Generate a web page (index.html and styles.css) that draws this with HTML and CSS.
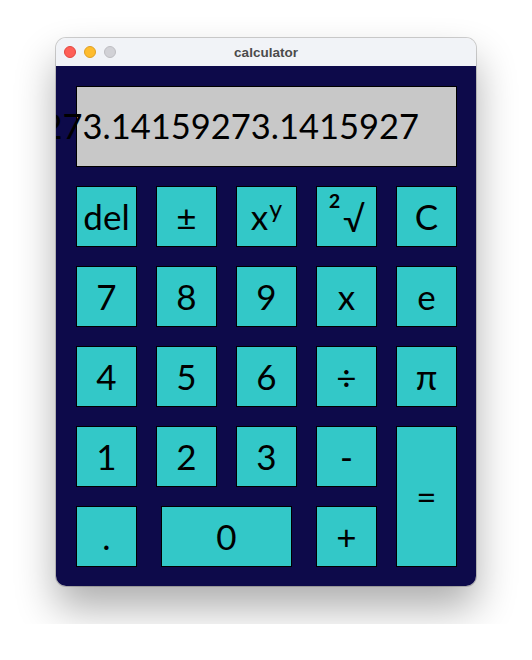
FILE: index.html
```html
<!DOCTYPE html>
<html>
<head>
<meta charset="utf-8">
<link rel="stylesheet" href="styles.css">
</head>
<body>
<div class="window">
  <div class="titlebar">
    <div class="lights">
      <span class="light red"></span>
      <span class="light yellow"></span>
      <span class="light gray"></span>
    </div>
    <div class="title">calculator</div>
  </div>
  <div class="content">
    <div class="display"><span class="value">273.14159273.1415927</span></div>
    <div class="keys">
      <div class="key">del</div>
      <div class="key">±</div>
      <div class="key"><span class="label">x<sup class="sup">y</sup></span></div>
      <div class="key"><span class="label"><span class="sq">²</span>√</span></div>
      <div class="key">C</div>
      <div class="key">7</div>
      <div class="key">8</div>
      <div class="key">9</div>
      <div class="key">x</div>
      <div class="key">e</div>
      <div class="key">4</div>
      <div class="key">5</div>
      <div class="key">6</div>
      <div class="key">÷</div>
      <div class="key">π</div>
      <div class="key">1</div>
      <div class="key">2</div>
      <div class="key">3</div>
      <div class="key">-</div>
      <div class="key equals">=</div>
      <div class="key">.</div>
      <div class="key zero">0</div>
      <div class="key">+</div>
    </div>
  </div>
</div>
</body>
</html>
```

FILE: styles.css
```css
html, body {
  margin: 0;
  background: #ffffff;
}
body {
  padding: 38px 56px;
}
.window {
  width: 420px;
  border-radius: 10px;
  overflow: hidden;
  box-shadow: 0 0 0 1px rgba(0,0,0,0.18), 0 22px 40px rgba(0,0,0,0.32);
}
.titlebar {
  height: 28px;
  background: #f1f3f7;
  position: relative;
  display: flex;
  align-items: center;
  justify-content: center;
}
.lights {
  position: absolute;
  left: 8px;
  top: 8px;
  display: flex;
  gap: 8px;
}
.light {
  width: 12px;
  height: 12px;
  border-radius: 50%;
  box-sizing: border-box;
}
.red { background: #fe5f57; border: 1px solid #e2463f; }
.yellow { background: #febc2e; border: 1px solid #dfa023; }
.gray { background: #d1d1d6; border: 1px solid #bdbdc2; }
.title {
  font-family: "Liberation Sans", Arial, sans-serif;
  font-weight: bold;
  font-size: 13.5px;
  color: #4b4b4b;
}
.content {
  background: #0d0a4a;
  padding: 20px 19px 19px 20px;
}
.display {
  height: 81px;
  box-sizing: border-box;
  border: 1px solid #000;
  background: #c8c8c8;
  display: flex;
  align-items: center;
  justify-content: flex-end;
  padding-right: 37px;
  white-space: nowrap;
  overflow: visible;
  font-family: Lato, "Noto Sans", sans-serif;
  font-size: 34.5px;
  color: #000;
}
.value {
  line-height: 1;
}
.keys {
  margin-top: 19px;
  display: grid;
  grid-template-columns: repeat(5, 61px);
  grid-auto-rows: 61px;
  gap: 19px;
}
.key {
  box-sizing: border-box;
  border: 1px solid #000;
  background: #33c8c8;
  display: flex;
  align-items: center;
  justify-content: center;
  font-family: Lato, "Noto Sans", sans-serif;
  font-size: 35px;
  color: #000;
  line-height: 1;
}
.label {
  white-space: nowrap;
}
.sup {
  font-size: 25px;
  vertical-align: 12px;
  line-height: 0;
  margin-left: 1px;
}
.sq {
  font-size: 38px;
  position: relative;
  top: -6px;
  margin-right: 2px;
}
.equals {
  grid-column: 5;
  grid-row: 4 / span 2;
}
.zero {
  grid-column: 2 / span 2;
  width: 131px;
  justify-self: center;
}
```
